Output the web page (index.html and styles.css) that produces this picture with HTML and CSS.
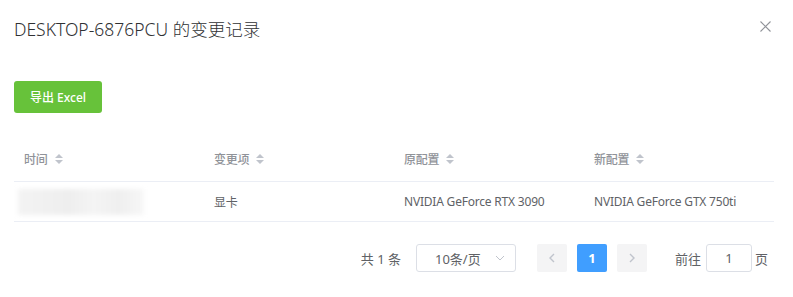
FILE: index.html
```html
<html lang="zh-CN">
  <head>
    <meta charset="UTF-8" />
    <meta name="viewport" content="width=device-width, initial-scale=1.0" />
    <title>变更记录</title>
    <link rel="stylesheet" href="styles.css">
  </head>
  <body>
    <div class="dialog">
      <div class="dialog-header">
        <span class="dialog-title">DESKTOP-6876PCU 的变更记录</span>
        <button class="dialog-close" type="button" aria-label="关闭">
          <svg width="11" height="11" viewBox="0 0 11 11">
            <path d="M0.5 0.5 L10.5 10.5 M10.5 0.5 L0.5 10.5" stroke="#909399" stroke-width="1.1" fill="none" />
          </svg>
        </button>
      </div>

      <div class="dialog-body">
        <button class="export-button" type="button">导出 Excel</button>

        <div class="table">
          <div class="table-row table-head">
            <div class="cell">时间 <span class="caret"><i class="up"></i><i class="down"></i></span></div>
            <div class="cell">变更项 <span class="caret"><i class="up"></i><i class="down"></i></span></div>
            <div class="cell">原配置 <span class="caret"><i class="up"></i><i class="down"></i></span></div>
            <div class="cell">新配置 <span class="caret"><i class="up"></i><i class="down"></i></span></div>
          </div>
          <div class="table-row">
            <div class="cell"><span class="blurred"></span></div>
            <div class="cell">显卡</div>
            <div class="cell">NVIDIA GeForce RTX 3090</div>
            <div class="cell">NVIDIA GeForce GTX 750ti</div>
          </div>
        </div>

        <div class="pagination">
          <span class="total">共 1 条</span>
          <div class="page-size">
            <span>10条/页</span>
            <svg width="10" height="6" viewBox="0 0 10 6">
              <path d="M1 1 L5 5 L9 1" stroke="#c0c4cc" stroke-width="1" fill="none" />
            </svg>
          </div>
          <button class="page-btn" type="button" disabled>
            <svg width="8" height="10" viewBox="0 0 8 10">
              <path d="M6 1 L2 5 L6 9" stroke="#c0c4cc" stroke-width="1.4" fill="none" />
            </svg>
          </button>
          <button class="page-num active" type="button">1</button>
          <button class="page-btn" type="button" disabled>
            <svg width="8" height="10" viewBox="0 0 8 10">
              <path d="M2 1 L6 5 L2 9" stroke="#c0c4cc" stroke-width="1.4" fill="none" />
            </svg>
          </button>
          <span class="jump">前往<span class="jump-input">1</span>页</span>
        </div>
      </div>
    </div>
  </body>
</html>
```

FILE: styles.css
```css
body {
  margin: 0;
  background-color: #ffffff;
  font-family: "Noto Sans", "Noto Sans CJK SC", sans-serif;
  color: #606266;
}
.dialog {
  width: 793px;
  height: 297px;
  box-sizing: border-box;
  padding: 0 19px 0 14px;
}
.dialog-header {
  display: flex;
  justify-content: space-between;
  align-items: center;
  padding-top: 17px;
  height: 24px;
}
.dialog-title {
  font-size: 17.5px;
  font-weight: 300;
  line-height: 24px;
  color: #303133;
}
.dialog-close {
  border: none;
  background: none;
  padding: 0;
  margin-right: 3px;
  align-self: flex-start;
  margin-top: 4px;
  cursor: pointer;
  display: flex;
}
.dialog-body {
  padding-top: 40px;
}
.export-button {
  background-color: #67c23a;
  color: white;
  border: none;
  border-radius: 3px;
  width: 88px;
  height: 32px;
  font-family: inherit;
  font-size: 12px;
  font-weight: 500;
  cursor: pointer;
}
.table {
  margin-top: 24px;
  width: 760px;
  font-size: 12px;
  letter-spacing: -0.2px;
}
.table-row {
  display: grid;
  grid-template-columns: 190px 190px 190px 190px;
  height: 39px;
  align-items: center;
  border-bottom: 1px solid #ebeef5;
}
.table-head {
  height: 44px;
  color: #909399;
  font-weight: 500;
}
.cell {
  padding: 0 10px;
  display: flex;
  align-items: center;
}
.caret {
  display: inline-flex;
  flex-direction: column;
  gap: 2px;
  margin-left: 7px;
}
.caret i {
  width: 0;
  height: 0;
  border-left: 4.5px solid transparent;
  border-right: 4.5px solid transparent;
}
.caret .up {
  border-bottom: 4px solid #c0c4cc;
}
.caret .down {
  border-top: 4px solid #c0c4cc;
}
.blurred {
  display: block;
  width: 126px;
  height: 26px;
  margin-left: -6px;
  background: linear-gradient(90deg, #f3f3f3, #eeeeee 40%, #f4f4f4 60%, #efefef 80%, #f7f7f7);
  filter: blur(2px);
}
.pagination {
  display: flex;
  justify-content: flex-end;
  align-items: center;
  margin-top: 22px;
  padding-right: 6px;
  height: 28px;
  font-size: 13px;
  color: #606266;
}
.total {
  margin-right: 15px;
}
.page-size {
  width: 100px;
  height: 28px;
  box-sizing: border-box;
  border: 1px solid #dcdfe6;
  border-radius: 3px;
  display: flex;
  align-items: center;
  justify-content: space-between;
  padding: 0 10px 0 18px;
  margin-right: 16px;
}
.page-btn,
.page-num {
  width: 30px;
  height: 28px;
  border: none;
  border-radius: 2px;
  background-color: #f4f4f5;
  margin: 0 5px;
  padding: 0;
  display: flex;
  align-items: center;
  justify-content: center;
  font-family: inherit;
}
.page-num.active {
  background-color: #409eff;
  color: white;
  font-weight: 700;
  font-size: 13px;
}
.jump {
  margin-left: 23px;
  display: flex;
  align-items: center;
}
.jump-input {
  width: 46px;
  height: 28px;
  box-sizing: border-box;
  border: 1px solid #dcdfe6;
  border-radius: 3px;
  margin: 0 3px 0 5px;
  display: flex;
  align-items: center;
  justify-content: center;
}
```
